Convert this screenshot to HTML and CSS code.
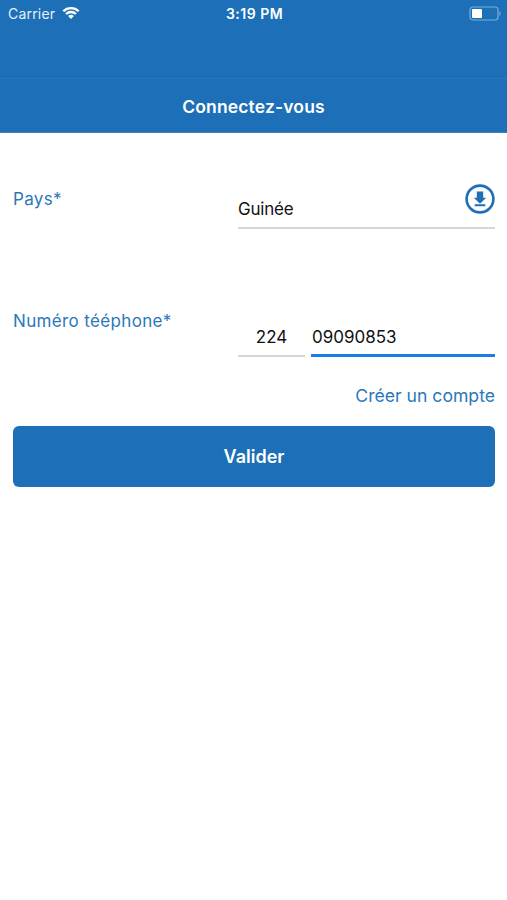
FILE: index.html
```
<!DOCTYPE html>
<html lang="fr">
	<head>
		<meta charset="utf-8">
		<title>Connectez-vous</title>
		<link rel="stylesheet" href="styles.css">
	</head>
	<body>
		<div class="header">
			<div class="status">
				<div class="carrier">
					<span>Carrier</span>
					<svg class="wifi" width="18" height="14" viewBox="0 0 18 14">
						<path d="M1.3 5.2a11 11 0 0 1 15.4 0M4 8a7.2 7.2 0 0 1 10 0" fill="none" stroke="#fff" stroke-width="2.3"/>
						<path d="M6.1 10.1a4.4 4.4 0 0 1 5.8 0L9 13z" fill="#fff"/>
					</svg>
				</div>
				<span class="time">3:19 PM</span>
				<svg class="battery" width="32" height="15" viewBox="0 0 32 15">
					<rect x="1" y="1" width="28" height="13" rx="3" fill="none" stroke="#78add9" stroke-width="1.2"/>
					<rect x="3" y="3" width="10" height="9" rx="1" fill="#fff"/>
					<path d="M30.4 5.2c1.6 .6 1.6 4 0 4.6z" fill="#78add9"/>
				</svg>
			</div>
			<h1>Connectez-vous</h1>
		</div>
		<form class="content">
			<div class="row pays">
				<label for="pays">Pays*</label>
				<div class="field select">
					<input type="text" id="pays" value="Guinée">
					<svg class="down" width="30" height="30" viewBox="0 0 30 30">
						<circle cx="15" cy="15" r="13.4" fill="none" stroke="#1d70b7" stroke-width="2.6"/>
						<path d="M11.8 7.5h6.4v6.3h3L15 19.8 8.8 13.8h3zM9.7 20.2h10.6v2H9.7z" fill="#1d70b7"/>
					</svg>
				</div>
			</div>
			<div class="row phone">
				<label for="numero">Numéro tééphone*</label>
				<div class="field">
					<input type="text" class="code" value="224">
					<input type="text" class="numero" id="numero" value="09090853">
				</div>
			</div>
			<a class="create" href="#">Créer un compte</a>
			<button type="button">Valider</button>
		</form>
	</body>
</html>
```
FILE: styles.css
```
*{margin: 0;padding: 0;box-sizing: border-box;}
body{
	background: #fff;
	color: #111;
	font-family: Inter, "Liberation Sans", sans-serif;
	font-size: 17px;
}
.header{
	height: 133px;
	background: #1d70b7;
	border-bottom: 1px solid #3c80bd;
	color: #fff;
}
.status{
	display: grid;
	grid-template-columns: 1fr auto 1fr;
	align-items: start;
	height: 79px;
	padding: 5px 6px 0 8px;
	border-bottom: 1px solid #2a78bb;
	font-size: 14px;
	line-height: 18px;
}
.carrier{
	display: flex;
	gap: 7px;
	color: #e4f0fa;
	letter-spacing: 0.2px;
}
.wifi{margin-top: 1px;}
.time{
	font-weight: 600;
	letter-spacing: 0.5px;
}
.battery{
	justify-self: end;
	margin-top: 1px;
}
h1{
	font-size: 17.5px;
	font-weight: 600;
	letter-spacing: 0.15px;
	line-height: 55px;
	text-align: center;
}
.content{padding: 51px 12px 0 13px;}
.row{
	display: grid;
	grid-template-columns: 225px 1fr;
}
.row label{
	color: #2b78b9;
	letter-spacing: 0.35px;
	line-height: 31px;
}
.pays{height: 122px;}
.field{
	display: flex;
	gap: 6px;
	align-items: flex-start;
}
.field input{
	width: 100%;
	min-width: 0;
	height: 31px;
	padding-bottom: 8px;
	border: 0;
	border-bottom: 2px solid #d6d6d6;
	outline: 0;
	background: none;
	color: #111;
	font-family: inherit;
	font-size: 17px;
}
.field #pays{letter-spacing: -0.2px;}
.select{
	position: relative;
	padding-top: 14px;
}
.down{
	position: absolute;
	top: 0;
	right: 0;
}
.phone .field{padding-top: 20px;}
.field .code{
	flex: 0 0 67px;
	text-align: center;
}
.field .numero{
	padding-bottom: 6px;
	padding-left: 1px;
	border-bottom: 3px solid #1b7ee6;
}
.create{
	display: block;
	margin-top: 24px;
	color: #2b78b9;
	font-size: 17.6px;
	line-height: 30px;
	text-align: right;
	text-decoration: none;
}
button{
	display: block;
	width: 100%;
	height: 61px;
	margin-top: 15px;
	border: 0;
	border-radius: 6px;
	background: #1d70b7;
	color: #fff;
	font-family: inherit;
	font-size: 18px;
	font-weight: 600;
}
```
